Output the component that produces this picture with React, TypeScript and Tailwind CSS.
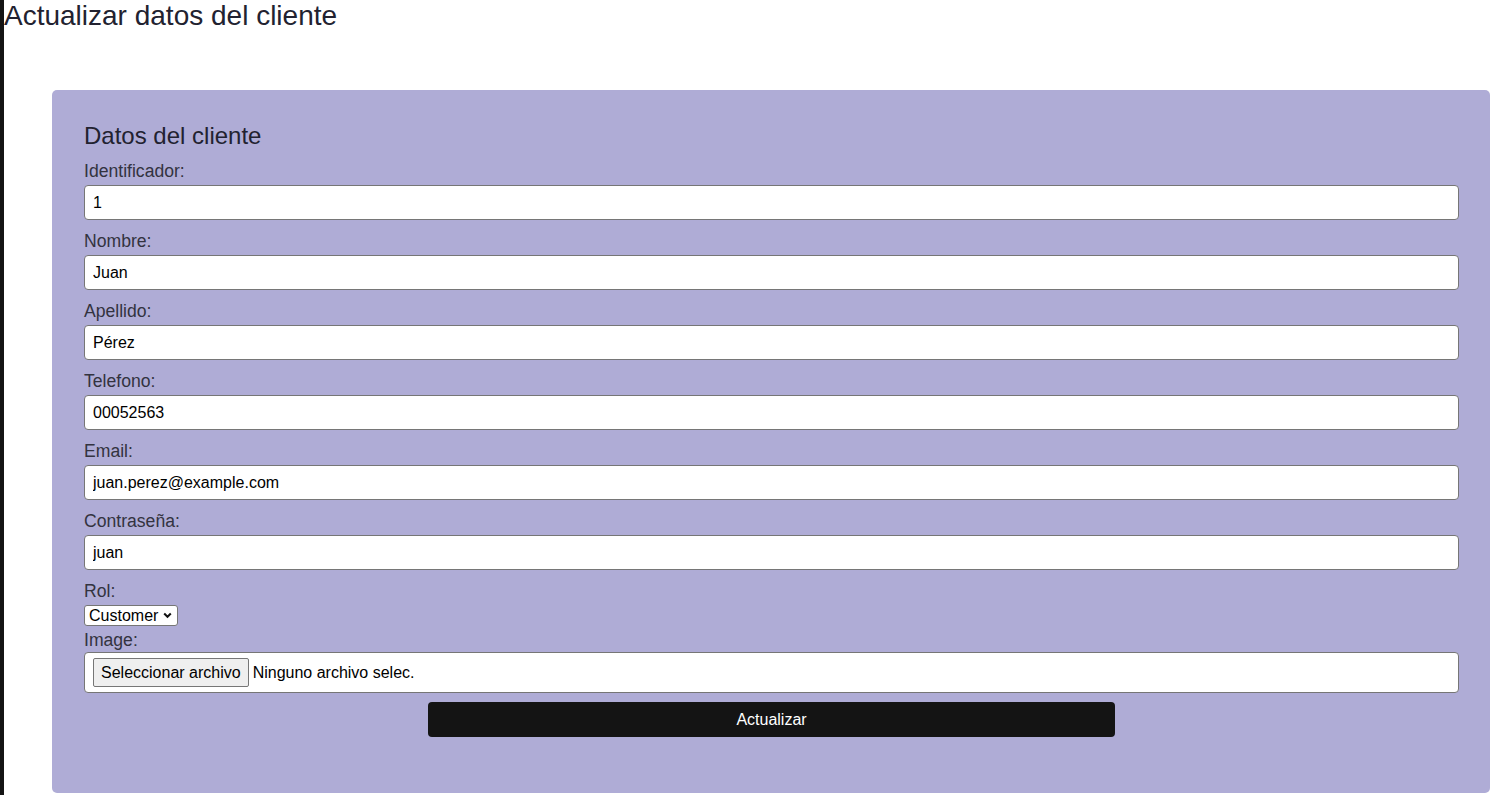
const fields = [
  { label: "Identificador:", value: "1" },
  { label: "Nombre:", value: "Juan" },
  { label: "Apellido:", value: "Pérez" },
  { label: "Telefono:", value: "00052563" },
  { label: "Email:", value: "juan.perez@example.com" },
  { label: "Contraseña:", value: "juan" },
];

export default function App() {
  return (
    <div className="flex min-h-screen bg-white font-['Liberation_Sans',Arial,sans-serif]">
      <div className="w-1 shrink-0 bg-[#141414]" />
      <div className="flex-1">
        <h1 className="text-[28px] leading-[32px] text-[#222230]">Actualizar datos del cliente</h1>

        <div className="mt-[58px] ml-12 mr-[2px] rounded-[5px] bg-[#afacd6] pt-8 pr-[31px] pb-[56px] pl-8">
          <h2 className="mb-[10px] text-[24px] leading-[28px] text-[#222230]">Datos del cliente</h2>

          {fields.map((f) => (
            <div key={f.label} className="mb-[10px]">
              <label className="block pt-px text-[17.6px] leading-5 text-[#333340]">{f.label}</label>
              <input
                defaultValue={f.value}
                className="mt-[4px] block h-[35px] w-full rounded border border-[#767676] bg-white px-2 text-base text-black"
              />
            </div>
          ))}

          <label className="block pt-px text-[17.6px] leading-5 text-[#333340]">Rol:</label>
          <div className="relative mt-[4px] inline-block">
            <select
              defaultValue="customer"
              className="block h-[21px] w-[94px] appearance-none rounded-[3px] border border-[#767676] bg-white pl-[4px] text-base leading-[19px] text-black"
            >
              <option value="customer">Customer</option>
              <option value="admin">Admin</option>
            </select>
            <svg
              className="pointer-events-none absolute top-[7px] right-[6px]"
              width="9"
              height="7"
              viewBox="0 0 9 7"
            >
              <path d="M1.2 1.5 L4.5 4.8 L7.8 1.5" stroke="#111" strokeWidth="2" fill="none" />
            </svg>
          </div>

          <label className="mt-[2px] block text-[17.6px] leading-5 text-[#333340]">Image:</label>
          <div className="mt-[2px] flex h-[41px] items-center gap-1 rounded border border-[#767676] bg-white px-2">
            <button
              type="button"
              className="h-[29px] rounded-[2px] border border-[#767676] bg-[#efefef] px-[7px] text-base text-black"
            >
              Seleccionar archivo
            </button>
            <span className="text-base text-black">Ninguno archivo selec.</span>
          </div>

          <div className="mt-[9px] flex justify-center">
            <button
              type="button"
              className="h-[35px] w-1/2 rounded bg-[#141414] text-base text-white"
            >
              Actualizar
            </button>
          </div>
        </div>
      </div>
    </div>
  );
}
